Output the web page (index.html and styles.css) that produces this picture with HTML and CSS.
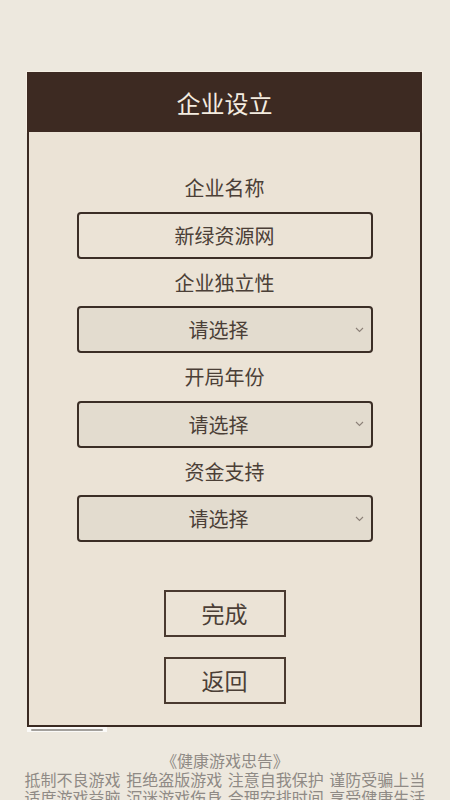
FILE: index.html
```html
<!DOCTYPE html>
<html lang="zh-CN">
<head>
<meta charset="utf-8">
<title>企业设立</title>
<link rel="stylesheet" href="styles.css">
</head>
<body>
<div class="page">
  <div class="card">
    <div class="card-head">企业设立</div>
    <div class="card-body">
      <div class="label">企业名称</div>
      <div class="field input">新绿资源网</div>
      <div class="label">企业独立性</div>
      <div class="field select"><span class="sel-text">请选择</span><svg class="chev" width="9" height="6" viewBox="0 0 9 6"><path d="M1 1 L4.5 4.5 L8 1" fill="none" stroke="#8c8178" stroke-width="1.1"/></svg></div>
      <div class="label">开局年份</div>
      <div class="field select"><span class="sel-text">请选择</span><svg class="chev" width="9" height="6" viewBox="0 0 9 6"><path d="M1 1 L4.5 4.5 L8 1" fill="none" stroke="#8c8178" stroke-width="1.1"/></svg></div>
      <div class="label">资金支持</div>
      <div class="field select"><span class="sel-text">请选择</span><svg class="chev" width="9" height="6" viewBox="0 0 9 6"><path d="M1 1 L4.5 4.5 L8 1" fill="none" stroke="#8c8178" stroke-width="1.1"/></svg></div>
      <div class="btn btn-first">完成</div>
      <div class="btn">返回</div>
    </div>
  </div>
  <div class="stub"><div class="stub-line"></div></div>
  <div class="footer">
    <div class="foot-title">《健康游戏忠告》</div>
    <div class="foot-line">抵制不良游戏 拒绝盗版游戏 注意自我保护 谨防受骗上当</div>
    <div class="foot-line">适度游戏益脑 沉迷游戏伤身 合理安排时间 享受健康生活</div>
  </div>
</div>
</body>
</html>
```

FILE: styles.css
```css
html, body {
  margin: 0;
  padding: 0;
  background: #ede8de;
  font-family: "Noto Sans CJK SC", "Noto Sans", sans-serif;
  height: 800px;
  overflow: hidden;
}

.page {
  padding-top: 72px;
  display: flex;
  flex-direction: column;
}

.card {
  margin-left: 27px;
  width: 395px;
  display: flex;
  flex-direction: column;
}

.card-head {
  height: 60px;
  background: #3d2a22;
  color: #f4ece0;
  font-size: 24px;
  display: flex;
  align-items: center;
  justify-content: center;
  box-shadow: 0 0 0 1px #f6efe4;
}

.card-body {
  background: #ebe3d6;
  border: 2px solid #3a2a22;
  border-top: none;
  height: 593px;
  padding-top: 32px;
  box-sizing: border-box;
  height: 595px;
  display: flex;
  flex-direction: column;
  align-items: center;
}

.label {
  height: 47.5px;
  display: flex;
  align-items: center;
  justify-content: center;
  font-size: 20px;
  color: #4b3f37;
}

.field {
  width: 296px;
  height: 47px;
  box-sizing: border-box;
  border: 2px solid #3b2e26;
  border-radius: 4px;
  display: flex;
  align-items: center;
  font-size: 20px;
  color: #4b3f37;
}

.input {
  justify-content: center;
  background: #ebe3d6;
}

.select {
  background: #e3dccf;
  padding-left: 10px;
  padding-right: 7px;
}

.sel-text {
  flex: 1;
  text-align: center;
  margin-right: 6px;
}

.chev {
  display: block;
  flex: none;
}

.btn {
  width: 122px;
  height: 47px;
  box-sizing: border-box;
  border: 2px solid #4a3a30;
  display: flex;
  align-items: center;
  justify-content: center;
  font-size: 23px;
  color: #4b3f37;
  margin-top: 20px;
}

.btn-first {
  margin-top: 47.5px;
}

.stub {
  margin-left: 27px;
  width: 80px;
  height: 5px;
  background: #fbfaf8;
  display: flex;
  align-items: center;
  justify-content: center;
}

.stub-line {
  width: 72px;
  height: 2px;
  border-radius: 1px;
  background: #a3a09c;
}

.footer {
  margin-top: 19px;
  display: flex;
  flex-direction: column;
  align-items: center;
  color: #8f8a85;
  font-size: 16px;
  line-height: 18.5px;
}

.foot-title {
  font-feature-settings: "palt";
}

.foot-line {
  white-space: nowrap;
  word-spacing: 2px;
}
```
